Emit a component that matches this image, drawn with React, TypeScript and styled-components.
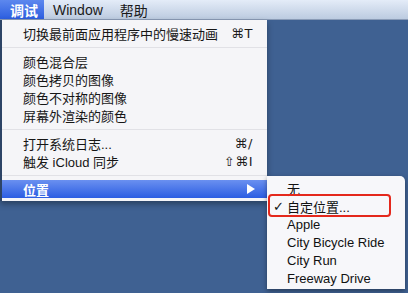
import React from "react";
import styled, { createGlobalStyle } from "styled-components";

const GlobalStyle = createGlobalStyle`
  html, body {
    margin: 0;
    padding: 0;
    overflow: hidden;
  }
  body {
    font-family: "Liberation Sans", "Noto Sans CJK SC", sans-serif;
  }
`;

const Desktop = styled.div`
  position: relative;
  width: 408px;
  height: 293px;
  background: #3f6192;
  overflow: hidden;
`;

const MenuBar = styled.div`
  display: flex;
  align-items: stretch;
  height: 19px;
  background: linear-gradient(#e4ecf8, #bccbe0);
  border-bottom: 1px solid #8a9bb6;
`;

const MenuTitle = styled.div<{ $active?: boolean }>`
  display: flex;
  align-items: center;
  padding: 0 ${(p) => (p.$active ? "6px" : "8px")} 0 ${(p) => (p.$active ? "10px" : "9px")};
  font-size: 14px;
  color: ${(p) => (p.$active ? "#fff" : "#1a1a1a")};
  font-weight: ${(p) => (p.$active ? 700 : 400)};
  background: ${(p) =>
    p.$active ? "linear-gradient(#5d88ee, #2c5ee0)" : "transparent"};
`;

const Dropdown = styled.div`
  position: absolute;
  top: 20px;
  left: 0;
  width: 265px;
  padding: 4px 0 3px;
  background: #f5f5f8;
  border-left: 2px solid #2d4466;
  box-shadow: 0 3px 6px rgba(0, 0, 0, 0.35);
`;

const Item = styled.div<{ $highlighted?: boolean }>`
  position: relative;
  display: flex;
  align-items: center;
  justify-content: space-between;
  height: 18px;
  padding: 0 14px 0 21px;
  font-size: 13px;
  color: ${(p) => (p.$highlighted ? "#fff" : "#161616")};
  font-weight: ${(p) => (p.$highlighted ? 700 : 400)};
  background: ${(p) =>
    p.$highlighted ? "linear-gradient(#6a90f0, #2b5de2)" : "transparent"};
`;

const Shortcut = styled.span`
  font-family: "DejaVu Sans", sans-serif;
  font-size: 13px;
  color: #1c1c1c;
  letter-spacing: 0.5px;
`;

const Arrow = styled.span`
  width: 0;
  height: 0;
  margin-right: -2px;
  border-top: 5px solid transparent;
  border-bottom: 5px solid transparent;
  border-left: 8px solid #fff;
`;

const Separator = styled.div`
  height: 10px;
  display: flex;
  align-items: center;

  &::after {
    content: "";
    flex: 1;
    height: 1px;
    background: #e1e1e6;
  }
`;

const Submenu = styled.div`
  position: absolute;
  left: 100%;
  top: -4px;
  width: 138px;
  padding: 3px 0 2px;
  background: #f7f7fa;
  border-radius: 0 5px 0 0;
  box-shadow: 0 2px 5px rgba(0, 0, 0, 0.4);
`;

const SubItem = styled.div<{ $checked?: boolean; $marked?: boolean }>`
  position: relative;
  display: flex;
  align-items: center;
  height: 18px;
  padding-left: 20px;
  font-size: 13px;
  font-weight: 400;
  color: #111;

  &::before {
    content: ${(p) => (p.$checked ? '"✓"' : "none")};
    position: absolute;
    left: 6px;
    font-family: "DejaVu Sans", sans-serif;
    font-size: 13px;
    font-weight: 700;
  }

  &::after {
    content: ${(p) => (p.$marked ? '""' : "none")};
    position: absolute;
    left: 1px;
    top: -3px;
    width: 119px;
    height: 19px;
    border: 2.5px solid #e4281c;
    border-radius: 4px;
  }
`;

const debugItems = ["颜色混合层", "颜色拷贝的图像", "颜色不对称的图像", "屏幕外渲染的颜色"];
const locations = ["无", "自定位置...", "Apple", "City Bicycle Ride", "City Run", "Freeway Drive"];

export default function App() {
  return (
    <Desktop>
      <GlobalStyle />
      <MenuBar>
        <MenuTitle $active>调试</MenuTitle>
        <MenuTitle>Window</MenuTitle>
        <MenuTitle>帮助</MenuTitle>
      </MenuBar>
      <Dropdown>
        <Item>
          <span>切换最前面应用程序中的慢速动画</span>
          <Shortcut>⌘T</Shortcut>
        </Item>
        <Separator />
        {debugItems.map((label) => (
          <Item key={label}>
            <span>{label}</span>
          </Item>
        ))}
        <Separator />
        <Item>
          <span>打开系统日志...</span>
          <Shortcut>⌘/</Shortcut>
        </Item>
        <Item>
          <span>触发 iCloud 同步</span>
          <Shortcut>⇧⌘I</Shortcut>
        </Item>
        <Separator />
        <Item $highlighted>
          <span>位置</span>
          <Arrow />
          <Submenu>
            {locations.map((loc, i) => (
              <SubItem key={loc} $checked={i === 1} $marked={i === 1}>
                {loc}
              </SubItem>
            ))}
          </Submenu>
        </Item>
      </Dropdown>
    </Desktop>
  );
}
